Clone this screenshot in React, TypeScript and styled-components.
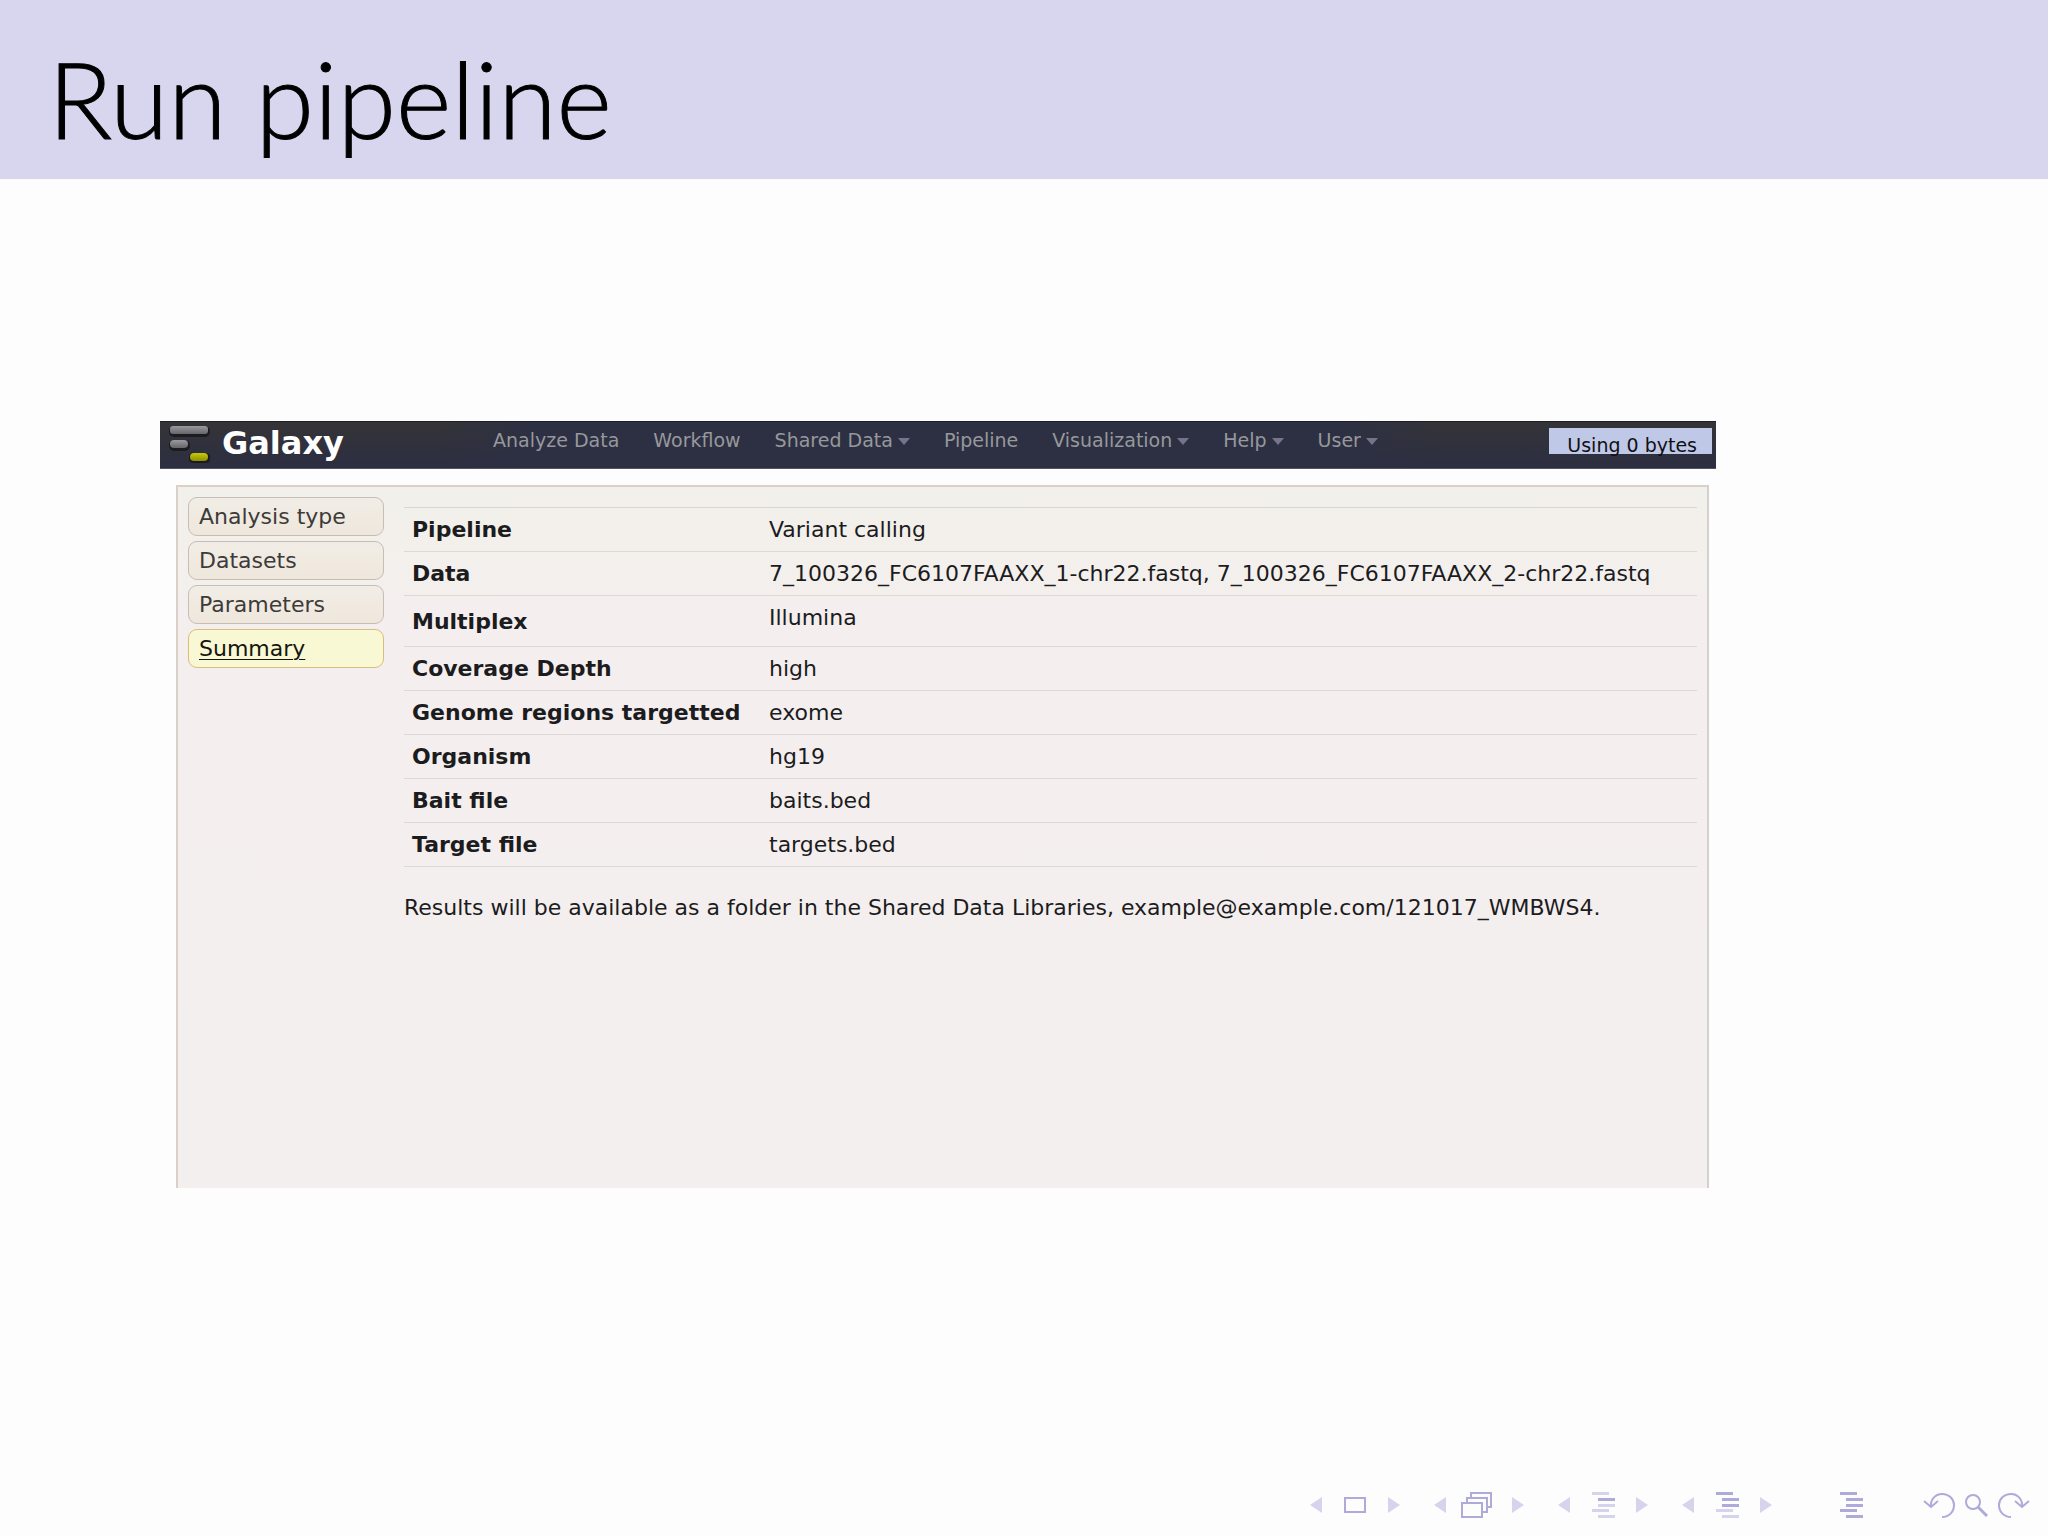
import React, { useState } from "react";
import styled, { createGlobalStyle, css } from "styled-components";

const GlobalStyle = createGlobalStyle`
  *, *::before, *::after { box-sizing: border-box; }
  body {
    margin: 0;
    background: #fdfdfd;
    font-family: "DejaVu Sans", Verdana, sans-serif;
    color: #1c1c1e;
  }
  button { font: inherit; color: inherit; cursor: pointer; }
`;

const Slide = styled.div`
  min-height: 100vh;
  display: flex;
  flex-direction: column;
`;

const SlideHeader = styled.header`
  padding: 36px 48px 19px;
  background: #d8d5ef;
`;

const SlideTitle = styled.h1`
  margin: 0;
  font-family: Lato, "Open Sans", sans-serif;
  font-weight: 300;
  font-size: 106px;
  line-height: 124px;
  -webkit-text-stroke: 1px #000;
  color: #000;
`;

const SlideBody = styled.main`
  flex: 1;
  padding: 242px 332px 48px 160px;
`;

const Masthead = styled.div`
  display: grid;
  grid-template-columns: 1fr auto 1fr;
  align-items: start;
  height: 48px;
  border-top: 1px solid #1f2026;
  border-bottom: 1px solid #55565c;
  background:
    linear-gradient(90deg, transparent 18%, #2d3043 24%, #2d3043 76%, transparent 82%),
    linear-gradient(#343437, #2c2e42);
`;

const Brand = styled.a`
  display: flex;
  align-items: center;
  gap: 11px;
  padding-left: 9px;
  font-size: 32px;
  line-height: 42px;
  font-weight: 700;
  color: #fff;
  text-decoration: none;
`;

const Menu = styled.nav`
  display: flex;
  gap: 34px;
  padding: 5px 5px 0 0;
`;

const MenuLink = styled.a`
  display: flex;
  align-items: center;
  gap: 5px;
  font-size: 19px;
  line-height: 26px;
  color: #97989c;
  text-decoration: none;
`;

const Caret = styled.span`
  margin-top: 3px;
  border: 6px solid transparent;
  border-top: 7px solid #74758a;
  border-bottom: 0;
`;

const Usage = styled.div`
  justify-self: end;
  height: 26px;
  margin: 6px 4px 0 0;
  padding: 0 15px 0 18px;
  background: #c0c8e8;
  font-size: 19px;
  line-height: 34px;
  color: #101014;
`;

const Panel = styled.section`
  display: flex;
  align-items: flex-start;
  gap: 20px;
  min-height: 703px;
  margin: 16px 7px 0 16px;
  padding: 10px;
  border: 2px solid #d9d1c8;
  border-right-color: #d3d0cd;
  border-bottom: 0;
  background: linear-gradient(#f2f0eb, #f3f0ec 60px, #f4efee 120px, #f3efee);
`;

const Steps = styled.div`
  display: flex;
  flex-direction: column;
  gap: 5px;
  width: 196px;
  flex: none;
`;

const Step = styled.button<{ $active: boolean }>`
  height: 39px;
  padding: 0 10px;
  border: 1px solid #c4beb4;
  border-radius: 9px;
  background: linear-gradient(#f1ede6, #efe7dc);
  font-size: 22px;
  line-height: 36px;
  text-align: left;
  color: #3d3b3a;
  ${(p) =>
    p.$active &&
    css`
      border-color: #d8be7c;
      background: #f9f8d4;
      color: #16160f;
      text-decoration: underline;
      text-underline-offset: 3px;
      text-decoration-thickness: 1px;
    `}
`;

const Content = styled.div`
  flex: 1;
  min-width: 0;
  padding: 10px 0 0;
`;

const SummaryTable = styled.table`
  width: 100%;
  border-collapse: separate;
  border-spacing: 0;
  border-top: 1px solid #d9d7d4;
  font-size: 22px;
  line-height: 28px;
`;

const Label = styled.th`
  width: 357px;
  padding: 8px 8px 7px;
  border-bottom: 1px solid #dcd8d6;
  text-align: left;
  font-weight: 700;
`;

const Value = styled.td<{ $tall?: boolean }>`
  padding: 8px 8px ${(p) => (p.$tall ? 14 : 7)}px;
  border-bottom: 1px solid #dcd8d6;
  vertical-align: top;
`;

const Note = styled.p`
  margin: 27px 0 0;
  font-size: 22px;
  line-height: 28px;
`;

const SlideFooter = styled.footer`
  display: flex;
  justify-content: flex-end;
  align-items: center;
  gap: 34px;
  height: 62px;
  padding-right: 18px;
`;

const NavGroup = styled.div`
  display: flex;
  justify-content: space-between;
  align-items: center;
  width: 90px;
`;

const Outline = styled.div`
  display: flex;
  margin: 0 26px 0 34px;
`;

const History = styled.div`
  display: flex;
  gap: 10px;
`;

const IconButton = styled.button`
  display: flex;
  padding: 0;
  border: 0;
  background: none;
`;

const LIGHT = "#d6d3ec";
const STRONG = "#aeaad9";

const Logo = () => (
  <svg width="42" height="40" viewBox="0 0 42 40" aria-hidden="true">
    <defs>
      <linearGradient id="grey" x1="0" y1="0" x2="0" y2="1">
        <stop offset="0" stopColor="#9a9a9c" />
        <stop offset="1" stopColor="#66666a" />
      </linearGradient>
      <linearGradient id="lime" x1="0" y1="0" x2="0" y2="1">
        <stop offset="0" stopColor="#c9c90c" />
        <stop offset="1" stopColor="#8d9000" />
      </linearGradient>
    </defs>
    <g fill="#1c1c20">
      <rect x="0" y="3" width="41" height="11" rx="5" />
      <rect x="0" y="17" width="21" height="11" rx="5" />
      <rect x="20" y="30" width="21" height="10" rx="4" />
    </g>
    <rect x="1" y="3" width="38" height="8" rx="3" fill="url(#grey)" />
    <rect x="1" y="17" width="18" height="8" rx="4" fill="url(#grey)" />
    <rect x="21" y="30" width="18" height="8" rx="4" fill="url(#lime)" />
  </svg>
);

const Arrow = ({ label, back }: { label: string; back?: boolean }) => (
  <IconButton aria-label={label}>
    <svg width="12" height="16" viewBox="0 0 12 16">
      <path d={back ? "M12 0V16L0 8Z" : "M0 0V16L12 8Z"} fill={LIGHT} />
    </svg>
  </IconButton>
);

const FrameIcon = () => (
  <svg width="22" height="16" viewBox="0 0 22 16" fill="none" stroke={STRONG} strokeWidth="2">
    <rect x="1" y="1" width="20" height="14" />
  </svg>
);

const StackIcon = () => (
  <svg width="36" height="26" viewBox="0 0 36 26" fill="#fdfdfd" stroke={STRONG} strokeWidth="2">
    <rect x="10" y="1" width="20" height="14" />
    <rect x="6" y="6" width="20" height="14" />
    <rect x="1" y="11" width="20" height="14" />
  </svg>
);

const LinesIcon = ({ strong }: { strong: number[] }) => (
  <svg width="23" height="26" viewBox="0 0 23 26">
    {[0, 6, 6, 0, 6].map((x, i) => (
      <rect
        key={i}
        x={x}
        y={[0, 6, 12, 17, 23][i]}
        width="17"
        height="3"
        fill={strong.includes(i) ? STRONG : LIGHT}
      />
    ))}
  </svg>
);

const UndoIcon = ({ mirrored }: { mirrored?: boolean }) => (
  <svg width="32" height="26" viewBox="0 0 32 26" fill="none" stroke={STRONG} strokeWidth="2">
    <g transform={mirrored ? "translate(32 0) scale(-1 1)" : undefined}>
      <path d="M8 15C7 8 12 2 19 2C26 2 31 7 31 13C31 20 26 25 19 25" />
      <path d="M1 9L8 15L15 9" />
    </g>
  </svg>
);

const SearchIcon = () => (
  <svg width="23" height="26" viewBox="0 0 23 26" fill="none" stroke={STRONG}>
    <circle cx="8" cy="10" r="7" strokeWidth="2" />
    <path d="M13 15L22 24" strokeWidth="3" />
  </svg>
);

const menu = [
  { text: "Analyze Data" },
  { text: "Workflow" },
  { text: "Shared Data", drop: true },
  { text: "Pipeline" },
  { text: "Visualization", drop: true },
  { text: "Help", drop: true },
  { text: "User", drop: true },
];

const steps = ["Analysis type", "Datasets", "Parameters", "Summary"];

const rows = [
  { label: "Pipeline", value: "Variant calling" },
  { label: "Data", value: "7_100326_FC6107FAAXX_1-chr22.fastq, 7_100326_FC6107FAAXX_2-chr22.fastq" },
  { label: "Multiplex", value: "Illumina", tall: true },
  { label: "Coverage Depth", value: "high" },
  { label: "Genome regions targetted", value: "exome" },
  { label: "Organism", value: "hg19" },
  { label: "Bait file", value: "baits.bed" },
  { label: "Target file", value: "targets.bed" },
];

export default function App() {
  const [step, setStep] = useState("Summary");
  return (
    <Slide>
      <GlobalStyle />
      <SlideHeader>
        <SlideTitle>Run pipeline</SlideTitle>
      </SlideHeader>
      <SlideBody>
        <Masthead>
          <Brand href="#home">
            <Logo />
            Galaxy
          </Brand>
          <Menu>
            {menu.map((item) => (
              <MenuLink key={item.text} href="#menu">
                {item.text}
                {item.drop && <Caret />}
              </MenuLink>
            ))}
          </Menu>
          <Usage>Using 0 bytes</Usage>
        </Masthead>
        <Panel>
          <Steps>
            {steps.map((name) => (
              <Step key={name} $active={name === step} onClick={() => setStep(name)}>
                {name}
              </Step>
            ))}
          </Steps>
          <Content>
            <SummaryTable>
              <tbody>
                {rows.map((row) => (
                  <tr key={row.label}>
                    <Label scope="row">{row.label}</Label>
                    <Value $tall={row.tall}>{row.value}</Value>
                  </tr>
                ))}
              </tbody>
            </SummaryTable>
            <Note>
              Results will be available as a folder in the Shared Data Libraries,
              example@example.com/121017_WMBWS4.
            </Note>
          </Content>
        </Panel>
      </SlideBody>
      <SlideFooter>
        <NavGroup>
          <Arrow label="Previous slide" back />
          <IconButton aria-label="Slide"><FrameIcon /></IconButton>
          <Arrow label="Next slide" />
        </NavGroup>
        <NavGroup>
          <Arrow label="Previous frame" back />
          <IconButton aria-label="Frame"><StackIcon /></IconButton>
          <Arrow label="Next frame" />
        </NavGroup>
        <NavGroup>
          <Arrow label="Previous subsection" back />
          <IconButton aria-label="Subsection"><LinesIcon strong={[1]} /></IconButton>
          <Arrow label="Next subsection" />
        </NavGroup>
        <NavGroup>
          <Arrow label="Previous section" back />
          <IconButton aria-label="Section"><LinesIcon strong={[0, 1, 2]} /></IconButton>
          <Arrow label="Next section" />
        </NavGroup>
        <Outline>
          <IconButton aria-label="Presentation"><LinesIcon strong={[0, 1, 2, 3, 4]} /></IconButton>
        </Outline>
        <History>
          <IconButton aria-label="Go back"><UndoIcon /></IconButton>
          <IconButton aria-label="Search"><SearchIcon /></IconButton>
          <IconButton aria-label="Go forward"><UndoIcon mirrored /></IconButton>
        </History>
      </SlideFooter>
    </Slide>
  );
}
